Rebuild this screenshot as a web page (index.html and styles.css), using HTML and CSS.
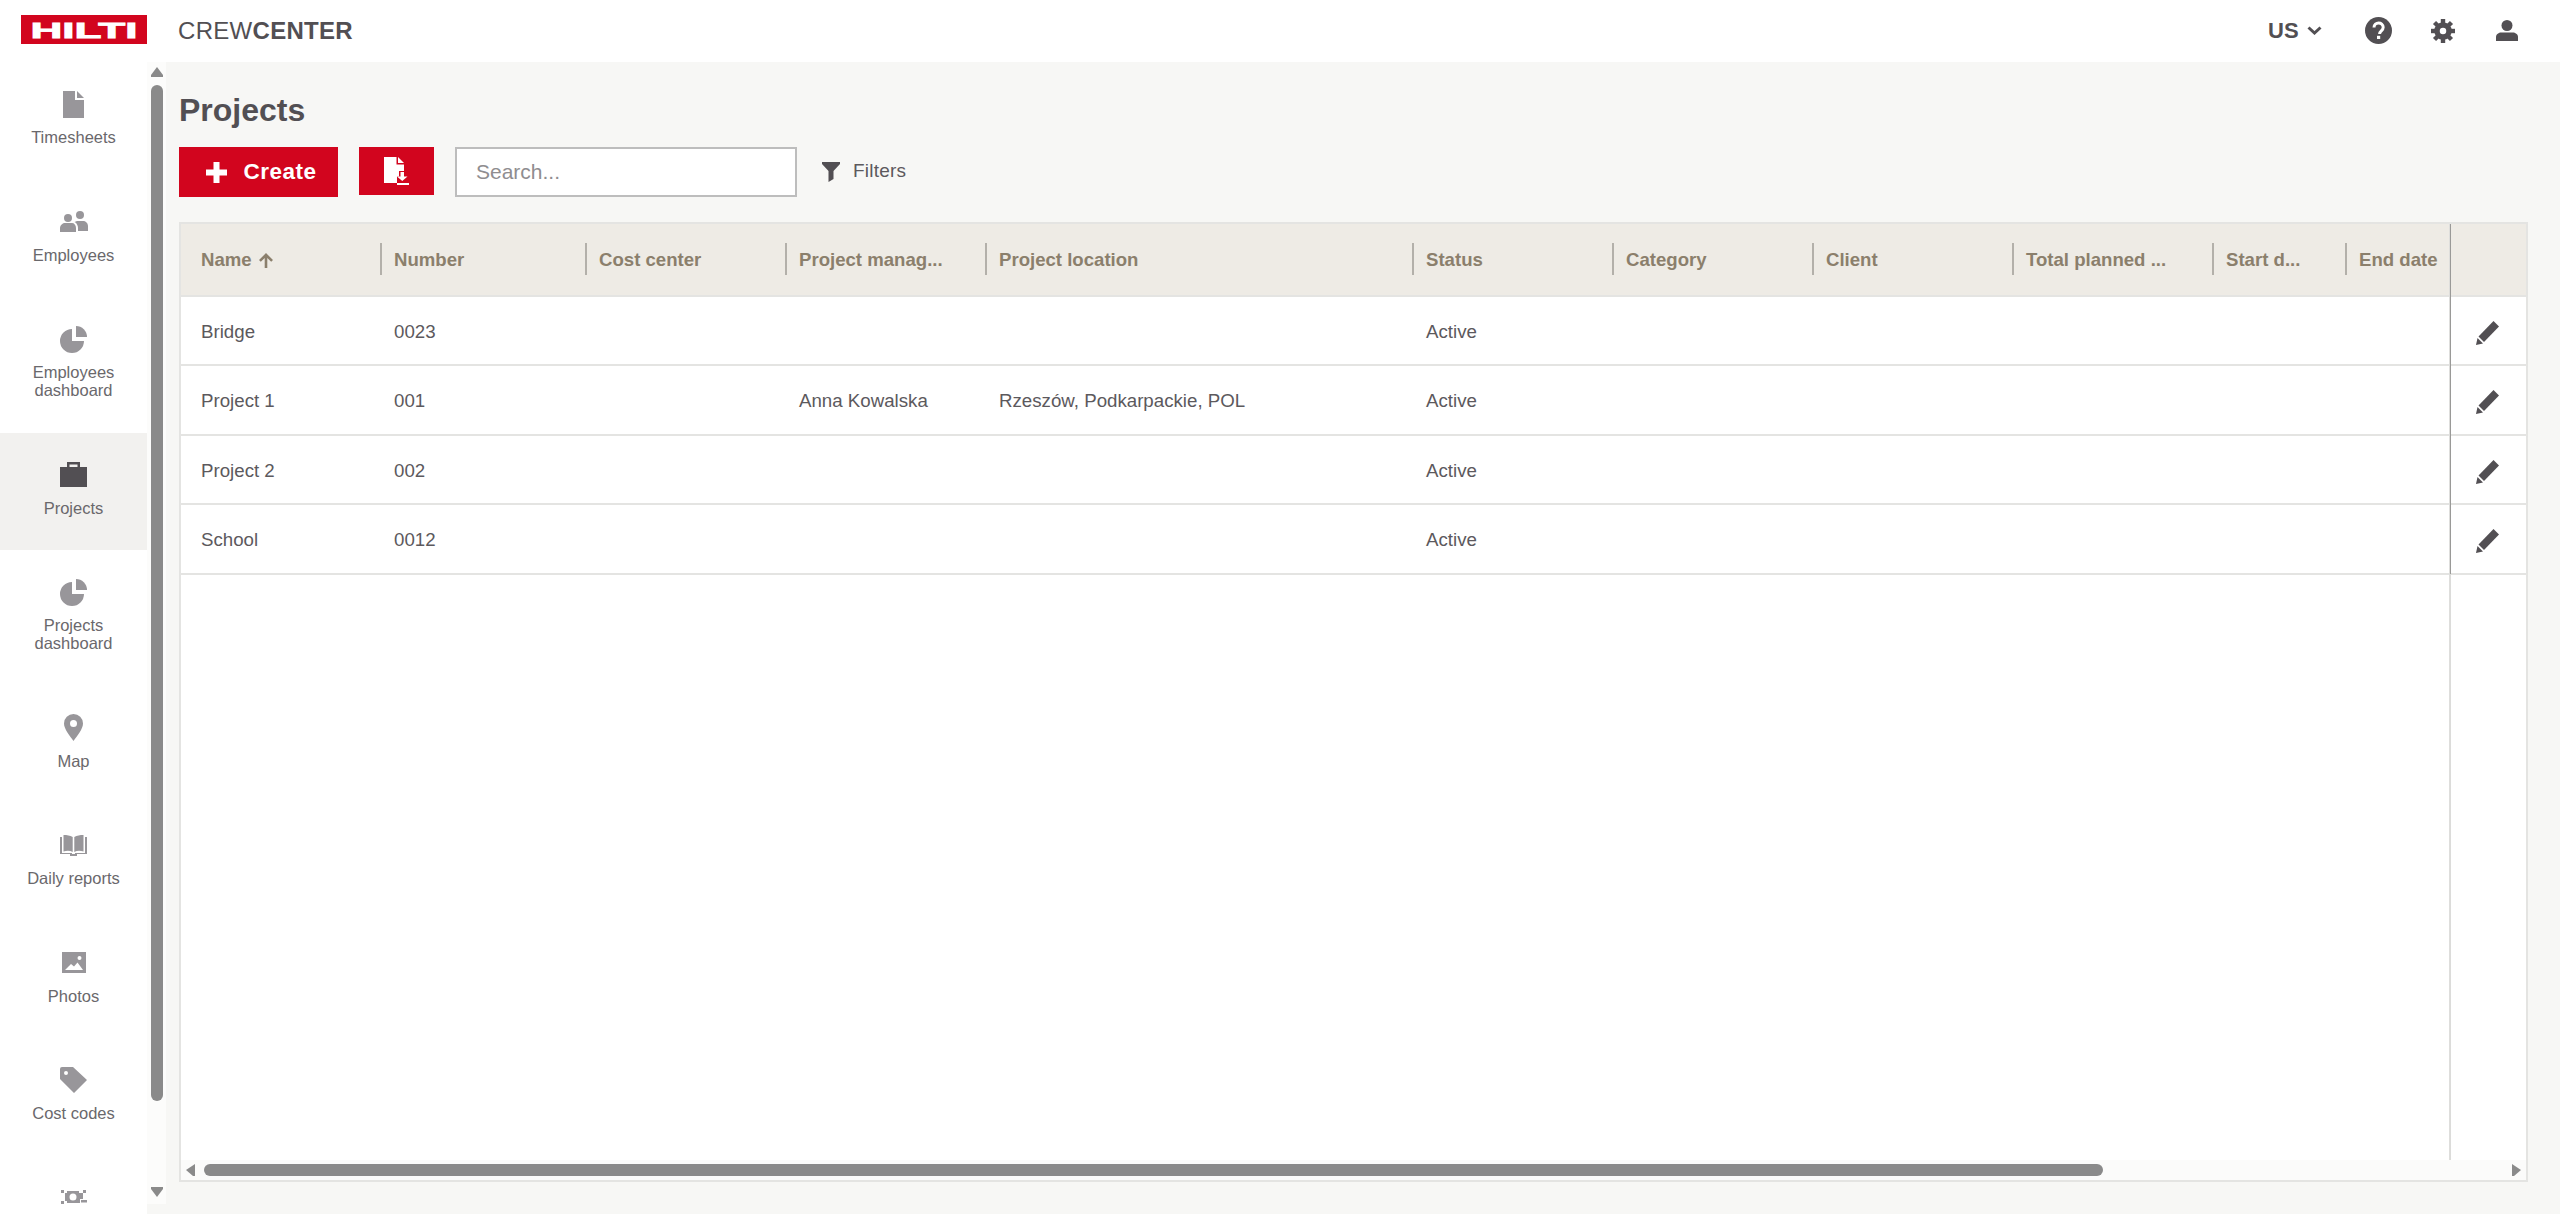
FILE: index.html
```html
<!DOCTYPE html>
<html lang="en">
<head>
<meta charset="utf-8">
<title>Crew Center - Projects</title>
<link rel="stylesheet" href="styles.css">
</head>
<body>
<div class="app">
  <header class="topbar">
    <div class="brand">
      <svg class="logo" viewBox="0 0 126 29"><rect width="126" height="29" fill="#d2051e"/><text class="logo-text" x="63" y="22.500" text-anchor="middle" textLength="107" lengthAdjust="spacingAndGlyphs">HILTI</text></svg>
      <div class="product">CREW<b>CENTER</b></div>
    </div>
    <div class="top-actions">
      <div class="locale">US<svg class="chev" viewBox="0 0 15 9"><path d="M1.500 1.500 7.500 7 13.500 1.500" fill="none" stroke="#524f53" stroke-width="3"/></svg></div>
      <svg class="top-help" viewBox="0 0 27 27"><circle cx="13.500" cy="13.500" r="13.500" fill="#524f53"/><path d="M9 10.500c0-6 9.200-6 9.200-.2 0 3.600-3.600 3.500-3.600 6.700" fill="none" stroke="#fff" stroke-width="3"/><rect x="12" y="18.800" width="3.200" height="3.200" fill="#fff"/></svg>
      <svg class="top-gear" viewBox="0 0 24 24"><circle cx="12" cy="12" r="6" fill="none" stroke="#524f53" stroke-width="5.500"/><g fill="#524f53"><rect x="9.800" width="4.400" height="5"/><rect x="9.800" width="4.400" height="5" transform="rotate(45 12 12)"/><rect x="9.800" width="4.400" height="5" transform="rotate(90 12 12)"/><rect x="9.800" width="4.400" height="5" transform="rotate(135 12 12)"/><rect x="9.800" width="4.400" height="5" transform="rotate(180 12 12)"/><rect x="9.800" width="4.400" height="5" transform="rotate(225 12 12)"/><rect x="9.800" width="4.400" height="5" transform="rotate(270 12 12)"/><rect x="9.800" width="4.400" height="5" transform="rotate(315 12 12)"/></g></svg>
      <svg class="top-user" viewBox="0 0 22 21"><circle cx="11" cy="5.500" r="5.500" fill="#524f53"/><path d="M0 21v-4c0-3 3-4.500 5-4.500h12c2 0 5 1.500 5 4.500v4z" fill="#524f53"/></svg>
    </div>
  </header>

  <div class="workspace">
    <aside class="sidebar">
      <nav class="nav">
        <a class="nav-item"><span class="nav-icon"><svg width="21" height="27" viewBox="0 0 21 27"><path class="ic" d="M0 0h12v9h9v18H0z"/><path class="ic" d="M14 0l7 7h-7z"/></svg></span><span class="nav-label">Timesheets</span></a>
        <a class="nav-item"><span class="nav-icon"><svg width="28" height="21" viewBox="0 0 28 21"><circle class="ic" cx="8" cy="7" r="4"/><circle class="ic" cx="20" cy="4" r="4"/><path class="ic" d="M0 21v-4c0-3 3-5 5-5h7c2 0 4 2 4 5v4z"/><path class="ic" d="M17 10h6c2.500 0 5 2 5 5v5H18v-3c0-2-1-5-3.500-6z"/></svg></span><span class="nav-label">Employees</span></a>
        <a class="nav-item"><span class="nav-icon"><svg width="27" height="27" viewBox="0 0 27 27"><path class="ic" d="M12 3v12h12a12 12 0 1 1-12-12z"/><path class="ic" d="M16 0a11 11 0 0 1 11 11H16z"/></svg></span><span class="nav-label">Employees<br>dashboard</span></a>
        <a class="nav-item active"><span class="nav-icon"><svg width="27" height="25" viewBox="0 0 27 25"><path class="ic" fill-rule="evenodd" d="M0 5h7V0h13v5h7v20H0zM9.500 2.500V5h8V2.500z"/></svg></span><span class="nav-label">Projects</span></a>
        <a class="nav-item"><span class="nav-icon"><svg width="27" height="27" viewBox="0 0 27 27"><path class="ic" d="M12 3v12h12a12 12 0 1 1-12-12z"/><path class="ic" d="M16 0a11 11 0 0 1 11 11H16z"/></svg></span><span class="nav-label">Projects<br>dashboard</span></a>
        <a class="nav-item"><span class="nav-icon"><svg width="19" height="27" viewBox="0 0 19 27"><path class="ic" fill-rule="evenodd" d="M9.500 0A9.500 9.500 0 0 1 19 9.500C19 15 13 22 9.500 27 6 22 0 15 0 9.500A9.500 9.500 0 0 1 9.500 0zm0 6a3.500 3.500 0 1 0 0 7 3.500 3.500 0 0 0 0-7z"/></svg></span><span class="nav-label">Map</span></a>
        <a class="nav-item"><span class="nav-icon"><svg width="27" height="21" viewBox="0 0 27 21"><path class="ic" d="M0 2h2v16h10v1H0z"/><path class="ic" d="M27 2h-2v16H15v1h12z"/><path class="ic" d="M3.500 0C7 0 10 .5 12.700 2v15C10 15.500 7 15.500 3.500 16.500zM23.500 0C20 0 17 .5 14.300 2v15c2.700-1.500 5.700-1.500 9.200-.5z"/><path class="ic" d="M10 19h7v2h-7z"/></svg></span><span class="nav-label">Daily reports</span></a>
        <a class="nav-item"><span class="nav-icon"><svg width="24" height="21" viewBox="0 0 24 21"><path class="ic" fill-rule="evenodd" d="M0 0h24v21H0zm3 18h18l-5.500-7.500-3.500 4-3-2.500zM17.500 4a2 2 0 1 0 0 4 2 2 0 0 0 0-4z"/></svg></span><span class="nav-label">Photos</span></a>
        <a class="nav-item"><span class="nav-icon"><svg width="27" height="26" viewBox="0 0 27 26"><path class="ic" fill-rule="evenodd" d="M2 0h11l14 13-13 13L0 12V2a2 2 0 0 1 2-2zm4 4a2 2 0 1 0 0 4 2 2 0 0 0 0-4z"/></svg></span><span class="nav-label">Cost codes</span></a>
        <a class="nav-item"><span class="nav-icon"><svg width="26" height="15" viewBox="0 0 26 15"><path class="ic" fill-rule="evenodd" d="M4 3h2V1h12v2h4v6h-3v4H6v-2H4zm8 .500a3.500 3.500 0 1 0 0 7 3.500 3.500 0 0 0 0-7z"/><path class="ic" d="M0 0h3v3H0zM22 0h3v3h-3zM0 11h3v3H0zM20 10h6v2.500h-6z"/></svg></span></a>
      </nav>
      <div class="v-scroll">
        <svg class="arrow-up" viewBox="0 0 12 10"><path d="M6 0l6 8v2H0V8z" fill="#8a8a8a"/></svg>
        <div class="v-thumb"></div>
        <svg class="arrow-down" viewBox="0 0 12 10"><path d="M0 0h12v2l-6 8-6-8z" fill="#8a8a8a"/></svg>
      </div>
    </aside>

    <main class="main">
      <h1 class="title">Projects</h1>
      <div class="toolbar">
        <button class="btn btn-create"><svg width="21" height="21" viewBox="0 0 21 21"><path d="M7.500 0h6v7.500H21v6h-7.500V21h-6v-7.500H0v-6h7.500z" fill="#fff"/></svg>Create</button>
        <button class="btn btn-export"><svg width="25" height="28" viewBox="0 0 25 28"><path fill="#fff" d="M0 0h12.500v7.500H20V14h-5v5.500h-2V26H0z"/><path fill="#fff" d="M14 0l6 6h-6z"/><path fill="#fff" d="M16.500 15h3.500v4.500h3.500L18.250 24 13 19.500h3.500zM13 26h12v2H13z"/></svg></button>
        <input class="search" type="text" placeholder="Search...">
        <div class="filters"><svg width="18" height="20" viewBox="0 0 18 20"><path d="M0 0h18v2l-6.500 7v8L6.500 20V9L0 2z" fill="#524f53"/></svg><span>Filters</span></div>
      </div>

      <section class="table">
        <div class="row head">
          <div class="cell first">Name<svg class="sort" width="14" height="15" viewBox="0 0 14 15"><path d="M7 0l7 7-1.800 1.800-3.900-3.900V15H5.700V4.900L1.800 8.800 0 7z" fill="#8b7f6c"/></svg></div>
          <div class="cell">Number</div><div class="cell">Cost center</div><div class="cell">Project manag...</div><div class="cell">Project location</div><div class="cell">Status</div><div class="cell">Category</div><div class="cell">Client</div><div class="cell">Total planned ...</div><div class="cell">Start d...</div><div class="cell">End date</div><div class="cell plain"></div>
        </div>
        <div class="row">
          <div class="cell first">Bridge</div><div class="cell">0023</div><div class="cell"></div><div class="cell"></div><div class="cell"></div><div class="cell">Active</div><div class="cell"></div><div class="cell"></div><div class="cell"></div><div class="cell"></div><div class="cell"></div>
          <div class="cell action"><svg class="pencil" viewBox="0 0 23 24"><path d="M17.500 0l5.500 5.500L8 21 2.500 15.500z" fill="#524f53"/><path d="M0 24l1.500-7 5.500 5.500z" fill="#524f53"/></svg></div>
        </div>
        <div class="row">
          <div class="cell first">Project 1</div><div class="cell">001</div><div class="cell"></div><div class="cell">Anna Kowalska</div><div class="cell">Rzeszów, Podkarpackie, POL</div><div class="cell">Active</div><div class="cell"></div><div class="cell"></div><div class="cell"></div><div class="cell"></div><div class="cell"></div>
          <div class="cell action"><svg class="pencil" viewBox="0 0 23 24"><path d="M17.500 0l5.500 5.500L8 21 2.500 15.500z" fill="#524f53"/><path d="M0 24l1.500-7 5.500 5.500z" fill="#524f53"/></svg></div>
        </div>
        <div class="row">
          <div class="cell first">Project 2</div><div class="cell">002</div><div class="cell"></div><div class="cell"></div><div class="cell"></div><div class="cell">Active</div><div class="cell"></div><div class="cell"></div><div class="cell"></div><div class="cell"></div><div class="cell"></div>
          <div class="cell action"><svg class="pencil" viewBox="0 0 23 24"><path d="M17.500 0l5.500 5.500L8 21 2.500 15.500z" fill="#524f53"/><path d="M0 24l1.500-7 5.500 5.500z" fill="#524f53"/></svg></div>
        </div>
        <div class="row">
          <div class="cell first">School</div><div class="cell">0012</div><div class="cell"></div><div class="cell"></div><div class="cell"></div><div class="cell">Active</div><div class="cell"></div><div class="cell"></div><div class="cell"></div><div class="cell"></div><div class="cell"></div>
          <div class="cell action"><svg class="pencil" viewBox="0 0 23 24"><path d="M17.500 0l5.500 5.500L8 21 2.500 15.500z" fill="#524f53"/><path d="M0 24l1.500-7 5.500 5.500z" fill="#524f53"/></svg></div>
        </div>
        <div class="filler"></div>
        <div class="h-scroll">
          <svg class="arrow-h" viewBox="0 0 9 12"><path d="M9 0v12H7L0 6z" fill="#8a8a8a"/></svg>
          <div class="h-thumb"></div>
          <svg class="arrow-h" viewBox="0 0 9 12"><path d="M0 0v12h2l7-6z" fill="#8a8a8a"/></svg>
        </div>
        <div class="pin-line"></div>
      </section>
    </main>
  </div>
</div>
</body>
</html>
```

FILE: styles.css
```css
* { box-sizing: border-box; }
html, body { margin: 0; height: 100%; overflow: hidden; }
body { font-family: "Liberation Sans", Arial, sans-serif; color: #524f53; background: #fff; }
.app { width: 2560px; height: 1214px; display: flex; flex-direction: column; }

.topbar { height: 62px; flex: none; display: flex; align-items: center; justify-content: space-between; padding: 0 42px 0 21px; background: #fff; }
.brand { display: flex; align-items: center; gap: 31px; }
.logo { width: 126px; height: 29px; display: block; margin-top: -4px; }
.logo-text { font-family: "Liberation Sans", sans-serif; font-weight: 700; font-size: 22px; fill: #fff; stroke: #fff; stroke-width: .8px; }
.product { font-size: 24px; letter-spacing: .3px; color: #524f53; line-height: 28px; margin-top: -1px; }
.product b { font-weight: 700; }
.top-actions { display: flex; align-items: center; margin-top: -1px; }
.locale { display: flex; align-items: center; gap: 8px; font-size: 22px; font-weight: 700; width: 97px; }
.chev { width: 15px; height: 9px; }
.top-help { width: 27px; height: 27px; }
.top-gear { width: 24px; height: 24px; margin-left: 39px; }
.top-user { width: 22px; height: 21px; margin-left: 41px; }

.workspace { flex: 1; display: flex; min-height: 0; background: #f7f7f5; }
.sidebar { flex: none; width: 166px; display: flex; background: linear-gradient(90deg, #fff 147px, transparent 147px); }
.nav { width: 147px; height: 1142px; overflow: hidden; background: #fff; flex: none; }
.nav-item { display: block; padding: 28px 0 33.5px; text-align: center; }
.nav-item.active { background: #f2f1ef; }
.nav-icon { height: 28px; display: flex; align-items: center; justify-content: center; margin-bottom: 10px; }
.nav-label { display: block; font-size: 16.5px; line-height: 18px; color: #6a686c; }
.ic { fill: #98969a; }
.active .ic { fill: #524f53; }

.v-scroll { width: 19px; height: 1142px; background: #fcfcfb; display: flex; flex-direction: column; align-items: center; padding: 5px 3px 7px 4px; }
.arrow-up, .arrow-down { width: 12px; height: 10px; flex: none; }
.v-thumb { width: 12px; height: 1016px; margin: 8px 0 auto; background: #8a8a8a; border-radius: 6px; }

.main { flex: 1; min-width: 0; display: flex; flex-direction: column; padding: 28px 32px 32px 13px; }
.title { margin: 0 0 17px; font-size: 32px; line-height: 40px; font-weight: 700; color: #524f53; }
.toolbar { display: flex; align-items: flex-start; height: 50px; margin-bottom: 25px; }
.btn { border: 0; background: #d2051e; color: #fff; padding: 0; display: flex; align-items: center; justify-content: center; font-family: inherit; }
.btn-create { width: 159px; height: 50px; gap: 16px; font-size: 22.5px; font-weight: 700; letter-spacing: .5px; padding-left: 6px; }
.btn-export { width: 75px; height: 48px; margin-left: 21px; }
.search { width: 342px; height: 50px; margin-left: 21px; border: 2px solid #bdbdbd; background: #fff; padding: 0 19px; font-family: inherit; font-size: 21px; color: #524f53; outline: 0; }
.search::placeholder { color: #8f8d90; opacity: 1; }
.filters { display: flex; align-items: center; gap: 13px; margin-left: 25px; height: 48px; font-size: 19px; letter-spacing: .2px; color: #5c595d; }
.filters svg { margin-top: 2px; }

.table { flex: 1; position: relative; display: flex; flex-direction: column; background: #fff; border: 2px solid #e4e4e2; min-height: 0; }
.row { display: grid; grid-template-columns: 199px 205px 200px 200px 427px 200px 200px 200px 200px 133px 106px 1fr; height: 69.5px; flex: none; border-bottom: 2px solid #e4e4e2; align-items: center; font-size: 18.7px; color: #5c595d; }
.cell { padding-left: 14px; padding-top: 3px; white-space: nowrap; overflow: hidden; line-height: 22px; }
.cell.first { padding-left: 20px; }
.row.head { height: 72.5px; background: #eeebe5; color: #8b7f6c; font-weight: 700; font-size: 18.6px; }
.head .cell { border-left: 2px solid #b3b0aa; height: 32px; line-height: 34px; padding-left: 12px; padding-top: 0; }
.head .cell.first { border-left: 0; padding-left: 20px; }
.head .cell.plain { border-left: 0; }
.sort { margin-left: 7px; vertical-align: -2px; }
.action { padding-left: 25px; padding-top: 0; margin-top: 5px; overflow: visible; }
.pencil { width: 23px; height: 24px; display: block; }
.filler { flex: 1; }
.h-scroll { height: 20px; flex: none; background: #fbfbfa; display: flex; align-items: center; padding: 0 5px 0 5px; }
.arrow-h { width: 9px; height: 12px; flex: none; }
.h-thumb { width: 1899px; height: 12px; margin: 0 auto 0 9px; background: #8a8a8a; border-radius: 6px; }
.pin-line { position: absolute; top: 0; bottom: 20px; right: 75px; width: 1px; background: linear-gradient(180deg, #9a9a98 0, #9a9a98 350px, #dcdcda 350px); box-shadow: -1px 0 0 #dededc; }
```
